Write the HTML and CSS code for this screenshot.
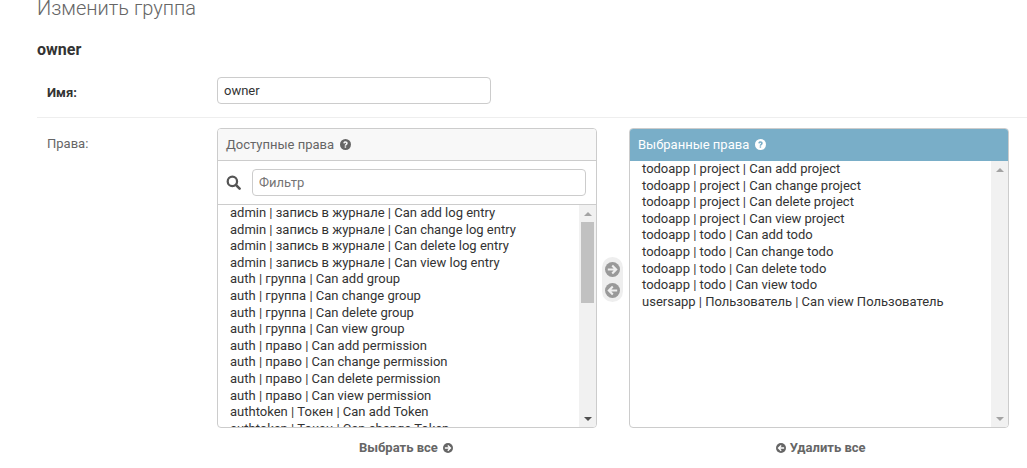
FILE: index.html
```html
<!DOCTYPE html>
<html>

<head>
	<title>Изменить группа</title>
	<link rel="stylesheet" href="styles.css">
</head>

<body>
	<svg class="defs" width="0" height="0">
		<symbol id="help" viewBox="0 0 12 12">
			<circle cx="6" cy="6" r="6" fill="currentColor"/>
			<path d="M3.600 4.500C3.700 3.200 4.700 2.500 6 2.500c1.400 0 2.400.8 2.400 2 0 1.700-1.700 1.600-1.700 2.800H5.100C5.100 5.500 6.700 5.500 6.700 4.600 6.700 4.200 6.400 4 6 4c-.5 0-.8.300-.9.900z" fill="var(--hole)"/>
			<rect x="5.100" y="8" width="1.600" height="1.500" fill="var(--hole)"/>
		</symbol>
		<symbol id="right" viewBox="0 0 16 16">
			<circle cx="8" cy="8" r="8" fill="currentColor"/>
			<path d="M8.500 3 13.500 8l-5 5-1.600-1.600 2.300-2.300H3V6.900H9.200L6.900 4.600z" fill="var(--hole)"/>
		</symbol>
		<symbol id="left" viewBox="0 0 16 16">
			<circle cx="8" cy="8" r="8" fill="currentColor"/>
			<path d="M7.500 3 2.500 8l5 5 1.600-1.600-2.300-2.300H13V6.900H6.800L9.100 4.600z" fill="var(--hole)"/>
		</symbol>
	</svg>

	<div class="content">
		<h1>Изменить группа</h1>
		<h2>owner</h2>

		<div class="form-row name-row">
			<label class="required">Имя:</label>
			<input class="name-input" type="text" value="owner">
		</div>

		<div class="form-row">
			<label>Права:</label>
			<div class="selector">

				<div class="selector-col">
					<div class="box">
						<div class="box-title">Доступные права <svg class="help"><use href="#help"/></svg></div>
						<div class="filter">
							<svg class="search" viewBox="0 0 16 16">
								<circle cx="6.800" cy="6.800" r="5" fill="none" stroke="#555" stroke-width="2.400"/>
								<path d="M10.500 10.500 14.500 14.500" stroke="#555" stroke-width="2.800" stroke-linecap="round"/>
							</svg>
							<input class="filter-input" type="text" placeholder="Фильтр">
						</div>
						<div class="list">
							<div class="options">
								<div>admin | запись в журнале | Can add log entry</div>
								<div>admin | запись в журнале | Can change log entry</div>
								<div>admin | запись в журнале | Can delete log entry</div>
								<div>admin | запись в журнале | Can view log entry</div>
								<div>auth | группа | Can add group</div>
								<div>auth | группа | Can change group</div>
								<div>auth | группа | Can delete group</div>
								<div>auth | группа | Can view group</div>
								<div>auth | право | Can add permission</div>
								<div>auth | право | Can change permission</div>
								<div>auth | право | Can delete permission</div>
								<div>auth | право | Can view permission</div>
								<div>authtoken | Токен | Can add Token</div>
								<div>authtoken | Токен | Can change Token</div>
							</div>
							<div class="scrollbar">
								<span class="arrow-up"></span>
								<span class="thumb"></span>
								<span class="arrow-down"></span>
							</div>
						</div>
					</div>
					<a class="chooseall">Выбрать все <svg class="circle-icon"><use href="#right"/></svg></a>
				</div>

				<div class="chooser">
					<svg class="chooser-icon"><use href="#right"/></svg>
					<svg class="chooser-icon"><use href="#left"/></svg>
				</div>

				<div class="selector-col">
					<div class="box">
						<div class="box-title box-title-chosen">Выбранные права <svg class="help"><use href="#help"/></svg></div>
						<div class="list">
							<div class="options">
								<div>todoapp | project | Can add project</div>
								<div>todoapp | project | Can change project</div>
								<div>todoapp | project | Can delete project</div>
								<div>todoapp | project | Can view project</div>
								<div>todoapp | todo | Can add todo</div>
								<div>todoapp | todo | Can change todo</div>
								<div>todoapp | todo | Can delete todo</div>
								<div>todoapp | todo | Can view todo</div>
								<div>usersapp | Пользователь | Can view Пользователь</div>
							</div>
							<div class="scrollbar">
								<span class="arrow-up arrow-pale"></span>
								<span class="thumb-none"></span>
								<span class="arrow-down arrow-pale"></span>
							</div>
						</div>
					</div>
					<a class="chooseall removeall"><svg class="circle-icon"><use href="#left"/></svg> Удалить все</a>
				</div>

			</div>
		</div>
	</div>
</body>

</html>
```

FILE: styles.css
```css
body {
	margin: 0;
	font-family: Roboto, "Liberation Sans", sans-serif;
	font-size: 13px;
	color: #333;
	background: #fff;
	overflow: hidden;
}

.defs { position: absolute; }

.content { padding-left: 37px; }

h1 {
	margin: 0;
	font-size: 20px;
	font-weight: 300;
	line-height: 16px;
	color: #666;
}

h2 {
	margin: 25px 0 0;
	font-size: 16px;
	font-weight: 700;
	line-height: 18px;
	color: #333;
}

.form-row {
	display: flex;
	padding: 0 0 0 10px;
}

.name-row {
	padding-top: 18px;
	padding-bottom: 13px;
	border-bottom: 1px solid #eee;
	margin-bottom: 10px;
}

label {
	display: block;
	width: 170px;
	flex: none;
	color: #666;
	line-height: 16px;
	padding-top: 8px;
}

label.required {
	color: #333;
	font-weight: 700;
}

.name-input {
	box-sizing: border-box;
	width: 274px;
	height: 27px;
	margin: 0;
	padding: 0 6px;
	border: 1px solid #ccc;
	border-radius: 4px;
	font: 13px Roboto, sans-serif;
	color: #333;
}

.selector { display: flex; }

.selector-col {
	width: 380px;
	display: flex;
	flex-direction: column;
}

.box {
	box-sizing: border-box;
	height: 300px;
	border: 1px solid #ccc;
	border-radius: 4px;
	overflow: hidden;
	display: flex;
	flex-direction: column;
}

.box-title {
	--hole: #f8f8f8;
	height: 32px;
	flex: none;
	box-sizing: border-box;
	padding: 0 8px;
	display: flex;
	align-items: center;
	gap: 6px;
	background: #f8f8f8;
	border-bottom: 1px solid #ccc;
	color: #666;
	font-size: 13px;
}

.box-title-chosen {
	--hole: #79aec8;
	background: #79aec8;
	color: #fff;
	border-bottom: 1px solid #79aec8;
}

.help {
	width: 11px;
	height: 11px;
}

.filter {
	flex: none;
	height: 44px;
	box-sizing: border-box;
	padding: 8px 10px 8px 8px;
	display: flex;
	align-items: center;
	gap: 11px;
	border-bottom: 1px solid #ccc;
}

.search {
	width: 15px;
	height: 15px;
	flex: none;
}

.filter-input {
	flex: 1;
	min-width: 0;
	box-sizing: border-box;
	height: 27px;
	margin: 0;
	padding: 0 6px;
	border: 1px solid #ccc;
	border-radius: 4px;
	font: 13px Roboto, sans-serif;
}

.filter-input::placeholder { color: #757575; }

.list {
	flex: 1;
	min-height: 0;
	display: flex;
	overflow: hidden;
}

.options {
	flex: 1;
	padding-left: 12px;
	color: #333;
	line-height: 16.6px;
	white-space: nowrap;
	overflow: hidden;
}

.scrollbar {
	width: 17px;
	flex: none;
	background: #f1f1f1;
	display: flex;
	flex-direction: column;
	align-items: center;
}

.arrow-up, .arrow-down {
	flex: none;
	width: 0;
	height: 0;
	border-left: 4px solid transparent;
	border-right: 4px solid transparent;
}

.arrow-up {
	margin: 7px 0 6px;
	border-bottom: 4px solid #a3a3a3;
}

.arrow-down {
	margin: 5px 0 6px;
	border-top: 4px solid #505050;
}

.arrow-pale { border-top-color: #a3a3a3; }

.thumb {
	width: 13px;
	height: 81px;
	background: #c1c1c1;
}

.thumb-none { flex: 1; }

.thumb + .arrow-down { margin-top: auto; }

.chooser {
	box-sizing: border-box;
	--hole: #eee;
	width: 21px;
	height: 45px;
	margin: 129px 6px 0 5px;
	padding: 5px 0 4px;
	background: #eee;
	border-radius: 11px;
	display: flex;
	flex-direction: column;
	align-items: center;
	justify-content: space-between;
	color: #999;
}

.chooser-icon {
	width: 15px;
	height: 15px;
}

.chooseall {
	--hole: #fff;
	margin-top: 12px;
	text-align: center;
	font-weight: 700;
	font-size: 13px;
	line-height: 16px;
	color: #666;
}

.circle-icon {
	width: 10px;
	height: 10px;
	margin: 0 2px;
	vertical-align: -1px;
}

.removeall { padding-left: 2px; }

.removeall .circle-icon { margin-right: 0; }
```
